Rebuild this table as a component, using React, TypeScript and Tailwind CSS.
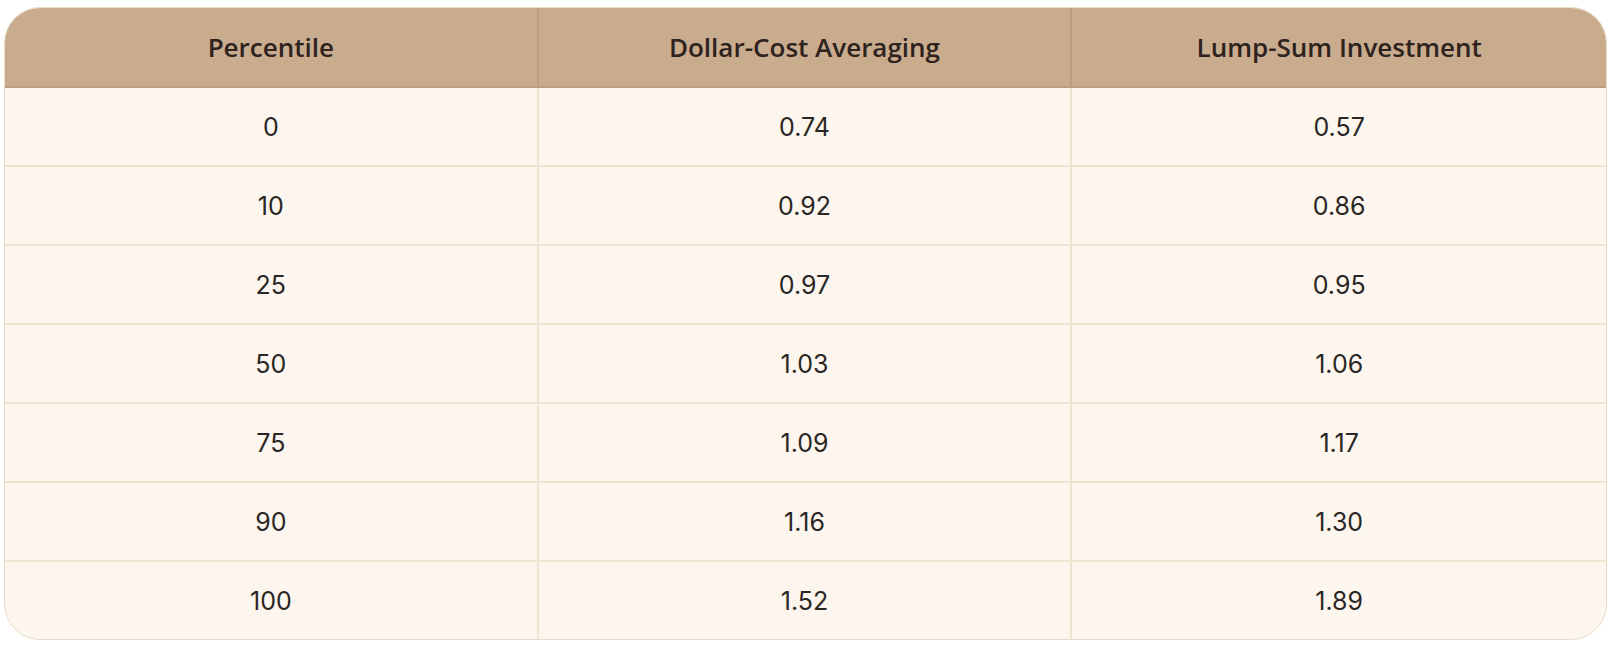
const rows = [
  ["0", "0.74", "0.57"],
  ["10", "0.92", "0.86"],
  ["25", "0.97", "0.95"],
  ["50", "1.03", "1.06"],
  ["75", "1.09", "1.17"],
  ["90", "1.16", "1.30"],
  ["100", "1.52", "1.89"],
];

const headers = ["Percentile", "Dollar-Cost Averaging", "Lump-Sum Investment"];

export default function App() {
  return (
    <div className="min-h-screen bg-white pt-[7px] pl-[4px] pr-[3px]">
      <div className="overflow-hidden rounded-[36px] border border-[#e8dcc9] bg-[#fdf6ee]">
        <div className="grid h-[80px] grid-cols-3 border-b-2 border-[#bd9e81] bg-[#c9ab8e]">
          {headers.map((h, i) => (
            <div
              key={h}
              className={`flex items-center justify-center text-[26px] font-semibold text-[#2d221d] ${
                i < 2 ? "border-r-2 border-[#bd9e81]" : ""
              }`}
              style={{ fontFamily: '"Open Sans", "Noto Sans", sans-serif' }}
            >
              {h}
            </div>
          ))}
        </div>
        {rows.map((r, ri) => {
          const last = ri === rows.length - 1;
          return (
            <div
              key={r[0]}
              className={`grid grid-cols-3 ${last ? "h-[77px]" : "h-[79px] border-b-2 border-[#efe3d1]"}`}
            >
              {r.map((v, i) => (
                <div
                  key={i}
                  className={`flex items-center justify-center pt-[3px] text-[25px] text-[#2a2624] ${
                    i < 2 ? "border-r-2 border-[#efe3d1]" : ""
                  }`}
                  style={{ fontFamily: 'Inter, "Liberation Sans", sans-serif' }}
                >
                  {v}
                </div>
              ))}
            </div>
          );
        })}
      </div>
    </div>
  );
}
